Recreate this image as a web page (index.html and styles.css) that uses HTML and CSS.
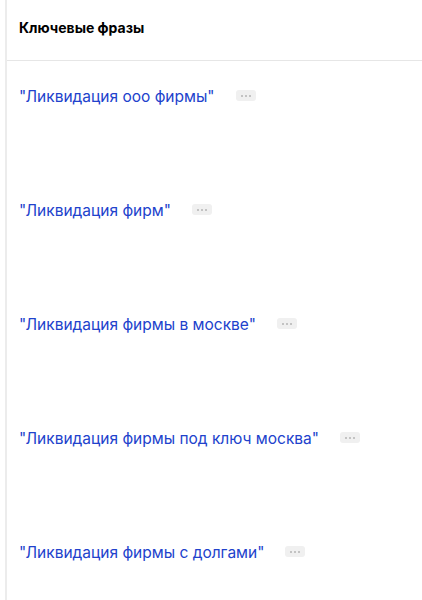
FILE: index.html
```html
<!DOCTYPE html>
<html lang="ru">
<head>
<meta charset="utf-8">
<link rel="stylesheet" href="styles.css">
</head>
<body>
<div class="panel">
  <div class="head">Ключевые фразы</div>
  <div class="list">
    <div class="row"><a class="phrase" href="#">"Ликвидация ооо фирмы"</a><span class="more"><i></i><i></i><i></i></span></div>
    <div class="row"><a class="phrase" href="#">"Ликвидация фирм"</a><span class="more"><i></i><i></i><i></i></span></div>
    <div class="row"><a class="phrase" href="#">"Ликвидация фирмы в москве"</a><span class="more"><i></i><i></i><i></i></span></div>
    <div class="row"><a class="phrase" href="#">"Ликвидация фирмы под ключ москва"</a><span class="more"><i></i><i></i><i></i></span></div>
    <div class="row"><a class="phrase" href="#">"Ликвидация фирмы с долгами"</a><span class="more"><i></i><i></i><i></i></span></div>
  </div>
</div>
</body>
</html>
```
FILE: styles.css
```css
html, body {
  margin: 0;
  padding: 0;
  background: #fff;
}
body {
  font-family: Inter, "Noto Sans", Arial, sans-serif;
  width: 422px;
  height: 600px;
  overflow: hidden;
}
.panel {
  margin-left: 5px;
  border-left: 2px solid #ececec;
  height: 600px;
  overflow: hidden;
}
.head {
  height: 61px;
  box-sizing: border-box;
  padding: 19px 0 0 12px;
  font-size: 14px;
  font-weight: 700;
  color: #000;
  line-height: 18px;
  border-bottom: 1px solid #e6e6e6;
}
.list {
  display: flex;
  flex-direction: column;
}
.row {
  height: 114px;
  flex: none;
  box-sizing: border-box;
  padding: 26px 0 0 12px;
  display: flex;
  align-items: flex-start;
  gap: 21px;
}
.phrase {
  font-size: 15.5px;
  line-height: 20px;
  color: #2142cc;
  text-decoration: none;
}
.more {
  margin-top: 3px;
  width: 20px;
  height: 11px;
  border-radius: 3px;
  background: #f0f0f0;
  display: flex;
  align-items: center;
  justify-content: center;
  gap: 2px;
}
.more i {
  width: 2px;
  height: 2px;
  background: #b5b5b5;
  border-radius: 1px;
}
```
